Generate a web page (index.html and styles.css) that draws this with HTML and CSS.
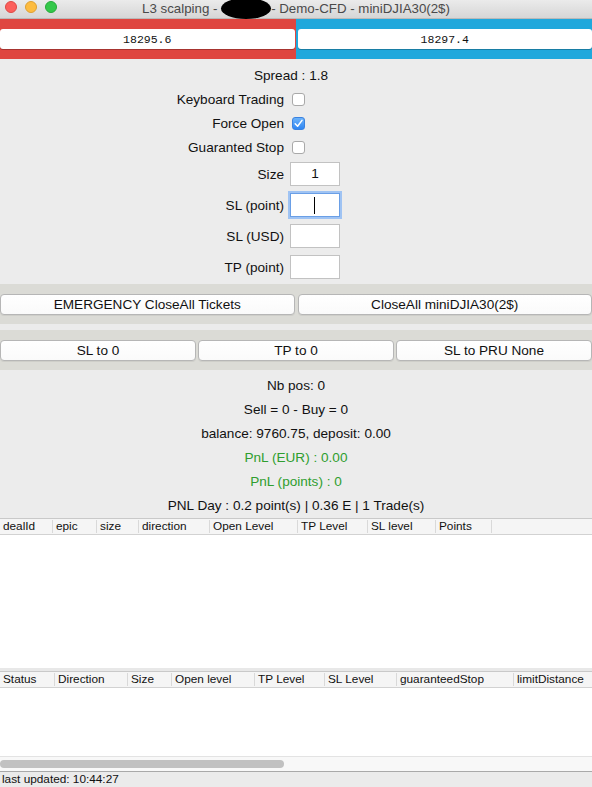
FILE: index.html
```html
<!DOCTYPE html>
<html lang="en">
<head>
  <meta charset="UTF-8">
  <meta name="viewport" content="width=device-width, initial-scale=1.0">
  <title>L3 scalping - Demo-CFD - miniDJIA30(2$)</title>
  <link rel="stylesheet" href="styles.css">
</head>
<body>
  <!-- window chrome -->
  <div class="titlebar">
    <div class="lights">
      <span class="light close"></span>
      <span class="light min"></span>
      <span class="light max"></span>
    </div>
    <div class="title">L3 scalping - <span class="masked"></span>- Demo-CFD - miniDJIA30(2$)</div>
  </div>

  <!-- bid / ask -->
  <div class="quote">
    <div class="side sell"><div class="price">18295.6</div></div>
    <div class="side buy"><div class="price">18297.4</div></div>
  </div>

  <!-- order settings -->
  <div class="order-form">
    <div class="spread">Spread : 1.8</div>
    <div class="form-row">
      <label>Keyboard Trading</label>
      <span class="check"></span>
    </div>
    <div class="form-row">
      <label>Force Open</label>
      <span class="check checked">
        <svg width="13" height="13" viewBox="0 0 13 13"><polyline points="3.2,6.8 5.6,9.3 10,3.4" fill="none" stroke="#fff" stroke-width="1.5" stroke-linecap="round" stroke-linejoin="round"/></svg>
      </span>
    </div>
    <div class="form-row">
      <label>Guaranted Stop</label>
      <span class="check"></span>
    </div>
    <div class="form-row field-row first">
      <label>Size</label>
      <div class="field">1</div>
    </div>
    <div class="form-row field-row">
      <label>SL (point)</label>
      <div class="field focused"><span class="caret"></span></div>
    </div>
    <div class="form-row field-row">
      <label>SL (USD)</label>
      <div class="field"></div>
    </div>
    <div class="form-row field-row">
      <label>TP (point)</label>
      <div class="field"></div>
    </div>
  </div>

  <div class="band">
    <button>EMERGENCY CloseAll Tickets</button>
    <button>CloseAll miniDJIA30(2$)</button>
  </div>
  <div class="strip"></div>
  <div class="band three">
    <button>SL to 0</button>
    <button>TP to 0</button>
    <button>SL to PRU None</button>
  </div>

  <!-- account summary -->
  <div class="stats">
    <div>Nb pos: 0</div>
    <div>Sell = 0 - Buy = 0</div>
    <div>balance: 9760.75, deposit: 0.00</div>
    <div class="gain">PnL (EUR) : 0.00</div>
    <div class="gain">PnL (points) : 0</div>
    <div>PNL Day : 0.2 point(s) | 0.36 E | 1 Trade(s)</div>
  </div>

  <!-- open positions -->
  <div class="table-head positions">
    <span>dealId</span>
    <span>epic</span>
    <span>size</span>
    <span>direction</span>
    <span>Open Level</span>
    <span>TP Level</span>
    <span>SL level</span>
    <span>Points</span>
    <span class="filler"></span>
  </div>
  <div class="table-body positions-body"></div>

  <div class="divider"></div>

  <!-- working orders -->
  <div class="table-head orders">
    <span>Status</span>
    <span>Direction</span>
    <span>Size</span>
    <span>Open level</span>
    <span>TP Level</span>
    <span>SL Level</span>
    <span>guaranteedStop</span>
    <span class="filler">limitDistance</span>
  </div>
  <div class="table-body orders-body"></div>
  <div class="hscroll"><div class="thumb"></div></div>

  <div class="statusbar">last updated: 10:44:27</div>
</body>
</html>
```

FILE: styles.css
```css
* {
  box-sizing: border-box;
}

body {
  margin: 0;
  width: 592px;
  height: 787px;
  overflow: hidden;
  font-family: 'Liberation Sans', Arial, sans-serif;
  font-size: 13.6px;
  color: #111;
  background: #fff;
}

/* title bar */
.titlebar {
  position: relative;
  height: 19px;
  background: linear-gradient(#ebebeb, #d6d6d6);
  border-bottom: 1px solid #b9b9b9;
  display: flex;
  align-items: center;
  justify-content: center;
}

.lights {
  position: absolute;
  left: 5px;
  top: 1px;
  display: flex;
  gap: 8px;
}

.light {
  width: 12px;
  height: 12px;
  border-radius: 50%;
}

.light.close {
  background: #fc605c;
  border: 1px solid #de4a45;
}

.light.min {
  background: #fdbc40;
  border: 1px solid #dea032;
}

.light.max {
  background: #34c84a;
  border: 1px solid #27a93a;
}

.title {
  color: #4a4a4a;
  font-size: 13.3px;
  line-height: 18px;
  white-space: nowrap;
}

.masked {
  display: inline-block;
  width: 50px;
  height: 21px;
  margin-top: -2px;
  background: #000;
  border-radius: 50%;
  vertical-align: middle;
}

/* bid / ask strip */
.quote {
  display: flex;
  height: 40px;
}

.side {
  flex: 1;
  padding: 10px 0;
}

.sell {
  background: #df4640;
  padding-right: 1px;
}

.buy {
  background: #20a8dc;
  padding-left: 2px;
}

.price {
  height: 20px;
  background: #fff;
  border-radius: 3px;
  box-shadow: 0 1px 0 rgba(0, 0, 0, 0.25);
  font-family: 'Liberation Mono', 'DejaVu Sans Mono', monospace;
  font-size: 11.5px;
  line-height: 21px;
  text-align: center;
  color: #111;
}

/* order form */
.order-form {
  background: #ececec;
  height: 225px;
  padding-top: 4px;
}

.spread {
  height: 24px;
  line-height: 25px;
  text-align: center;
  padding-right: 10px;
}

.form-row {
  display: flex;
  align-items: center;
  height: 24px;
  gap: 6px;
}

.form-row label {
  width: 284px;
  text-align: right;
}

.field-row {
  margin-top: 7px;
}

.field-row.first {
  margin-top: 3px;
}

.check {
  width: 13px;
  height: 13px;
  margin-left: 2px;
  background: #fff;
  border: 1px solid #a9a9a9;
  border-radius: 3px;
  display: flex;
}

.check.checked {
  background: linear-gradient(#6cb3fa, #2f86f3);
  border-color: #3a82e0;
}

.check svg {
  margin: -1px;
}

.field {
  width: 50px;
  height: 24px;
  background: #fff;
  border: 1px solid #c2c2c2;
  text-align: center;
  line-height: 22px;
  display: flex;
  align-items: center;
  justify-content: center;
}

.field.focused {
  border-color: #6a9fe6;
  box-shadow: 0 0 0 2px #9fc3f3;
}

.caret {
  width: 1px;
  height: 17px;
  background: #000;
  margin-left: -2px;
}

/* action buttons */
.band {
  background: #dbdbd6;
  height: 40px;
  padding: 10px 0 9px;
  display: flex;
  gap: 3px;
}

.band.three {
  gap: 2px;
}

.band button {
  flex: 1;
  height: 21px;
  margin: 0;
  background: linear-gradient(#fff, #fafafa);
  border: 1px solid #b6b6b6;
  border-radius: 4px;
  box-shadow: 0 1px 0 rgba(0, 0, 0, 0.06);
  font-family: inherit;
  font-size: 13.6px;
  color: #111;
  padding: 0;
}

.strip {
  height: 6px;
  background: #ebebeb;
}

/* summary */
.stats {
  background: #ececec;
  height: 148px;
  padding-top: 4px;
  text-align: center;
  line-height: 24px;
}

.gain {
  color: #2f9e2f;
}

/* tables */
.table-head {
  display: grid;
  height: 17px;
  background: #f5f5f5;
  border-top: 1px solid #c9c9c9;
  border-bottom: 1px solid #d2d2d2;
  font-size: 11.8px;
  align-items: center;
}

.table-head span {
  height: 13px;
  line-height: 13px;
  padding-left: 3px;
  border-right: 1px solid #d9d9d9;
  white-space: nowrap;
}

.table-head span.filler {
  border-right: none;
}

.positions {
  grid-template-columns: 53px 44px 42px 71px 88px 70px 68px 56px 1fr;
}

.orders {
  grid-template-columns: 55px 73px 44px 83px 70px 72px 117px 1fr;
}

.table-body {
  background: #fff;
}

.positions-body {
  height: 133px;
}

.divider {
  height: 3px;
  background: #e8e8e8;
}

.orders-body {
  height: 68px;
}

.hscroll {
  height: 15px;
  background: #f8f8f8;
  border-top: 1px solid #e3e3e3;
  padding: 3px 0 0 0;
}

.thumb {
  width: 284px;
  height: 8px;
  background: #c1c1c1;
  border-radius: 4px;
}

.statusbar {
  height: 16px;
  background: #ebebeb;
  border-top: 1px solid #a9a9a9;
  font-size: 11.8px;
  line-height: 15px;
  padding-left: 2px;
  color: #111;
}
```
